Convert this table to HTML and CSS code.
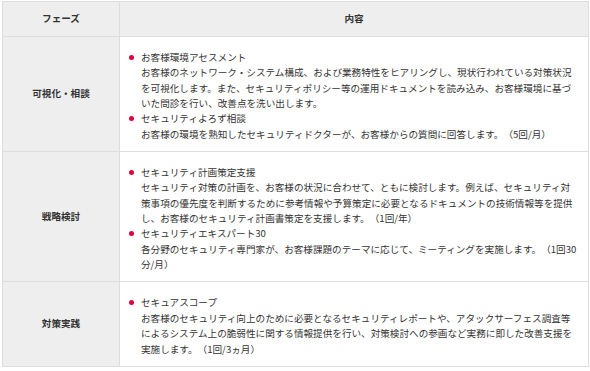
FILE: index.html
```html
<!DOCTYPE html>
<html lang="ja">
<head>
<meta charset="utf-8">
<link rel="stylesheet" href="styles.css">
</head>
<body>
<table class="phases">
  <colgroup><col class="col-phase"><col class="col-body"></colgroup>
  <thead>
    <tr><th>フェーズ</th><th>内容</th></tr>
  </thead>
  <tbody>
    <tr>
      <td class="phase">可視化・相談</td>
      <td class="content">
        <ul class="items">
          <li class="item"><span class="dot"></span><div class="text"><p>お客様環境アセスメント</p><p>お客様のネットワーク・システム構成、および業務特性をヒアリングし、現状行われている対策状況を可視化します。また、セキュリティポリシー等の運用ドキュメントを読み込み、お客様環境に基づいた問診を行い、改善点を洗い出します。</p></div></li>
          <li class="item"><span class="dot"></span><div class="text"><p>セキュリティよろず相談</p><p>お客様の環境を熟知したセキュリティドクターが、お客様からの質問に回答します。（5回/月）</p></div></li>
        </ul>
      </td>
    </tr>
    <tr>
      <td class="phase">戦略検討</td>
      <td class="content">
        <ul class="items">
          <li class="item"><span class="dot"></span><div class="text"><p>セキュリティ計画策定支援</p><p>セキュリティ対策の計画を、お客様の状況に合わせて、ともに検討します。例えば、セキュリティ対策事項の優先度を判断するために参考情報や予算策定に必要となるドキュメントの技術情報等を提供し、お客様のセキュリティ計画書策定を支援します。（1回/年）</p></div></li>
          <li class="item"><span class="dot"></span><div class="text"><p>セキュリティエキスパート30</p><p>各分野のセキュリティ専門家が、お客様課題のテーマに応じて、ミーティングを実施します。（1回30分/月）</p></div></li>
        </ul>
      </td>
    </tr>
    <tr>
      <td class="phase">対策実践</td>
      <td class="content">
        <ul class="items">
          <li class="item"><span class="dot"></span><div class="text"><p>セキュアスコープ</p><p>お客様のセキュリティ向上のために必要となるセキュリティレポートや、アタックサーフェス調査等によるシステム上の脆弱性に関する情報提供を行い、対策検討への参画など実務に即した改善支援を実施します。（1回/3ヵ月）</p></div></li>
        </ul>
      </td>
    </tr>
  </tbody>
</table>
</body>
</html>
```
FILE: styles.css
```css
html, body {
  margin: 0;
  background: #ffffff;
}
body {
  padding: 1px 2px 0 2px;
  font-family: "Noto Sans CJK JP", "Noto Sans", sans-serif;
  font-size: 9.6px;
  line-height: 1.6;
  color: #333333;
  text-spacing-trim: space-all;
}
.phases {
  width: 587px;
  border-collapse: collapse;
  table-layout: fixed;
}
.col-phase { width: 117px; }
.phases th,
.phases td {
  border: 1px solid #dddddd;
}
.phases th {
  background: #eeeeee;
  font-weight: 700;
  height: 34px;
  padding: 0;
  text-align: center;
  vertical-align: middle;
}
.phase {
  background: #eeeeee;
  font-weight: 700;
  text-align: center;
  vertical-align: middle;
}
.content {
  background: #ffffff;
  padding: 13px 11px 9px 9px;
  vertical-align: top;
}
.items {
  list-style: none;
  margin: 0;
  padding: 0;
}
.item {
  display: flex;
  align-items: flex-start;
}
.dot {
  flex: none;
  width: 5px;
  height: 5px;
  border-radius: 50%;
  background: #e4003b;
  margin: 5px 7px 0 0;
}
.text {
  flex: 1;
  min-width: 0;
}
.text p {
  margin: 0;
}
```
